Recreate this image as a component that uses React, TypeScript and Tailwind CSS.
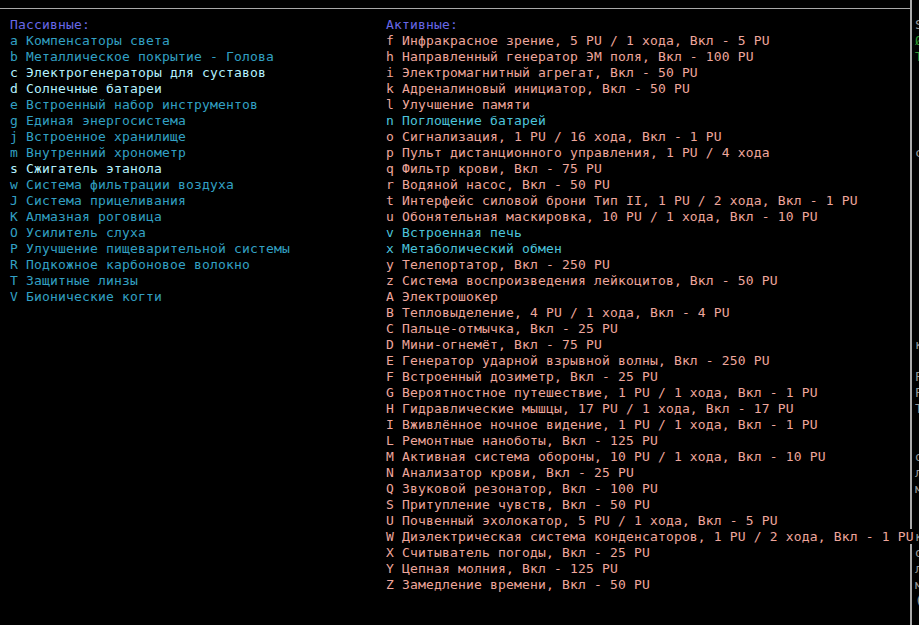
import React from "react";

type Item = { t: string; c?: "hi" | "cy" };

const passive: Item[] = [
  { t: "a Компенсаторы света" },
  { t: "b Металлическое покрытие - Голова" },
  { t: "c Электрогенераторы для суставов", c: "hi" },
  { t: "d Солнечные батареи", c: "hi" },
  { t: "e Встроенный набор инструментов" },
  { t: "g Единая энергосистема" },
  { t: "j Встроенное хранилище" },
  { t: "m Внутренний хронометр" },
  { t: "s Сжигатель этанола", c: "hi" },
  { t: "w Система фильтрации воздуха" },
  { t: "J Система прицеливания" },
  { t: "K Алмазная роговица" },
  { t: "O Усилитель слуха" },
  { t: "P Улучшение пищеварительной системы" },
  { t: "R Подкожное карбоновое волокно" },
  { t: "T Защитные линзы" },
  { t: "V Бионические когти" },
];

const active: Item[] = [
  { t: "f Инфракрасное зрение, 5 PU / 1 хода, Вкл - 5 PU" },
  { t: "h Направленный генератор ЭМ поля, Вкл - 100 PU" },
  { t: "i Электромагнитный агрегат, Вкл - 50 PU" },
  { t: "k Адреналиновый инициатор, Вкл - 50 PU" },
  { t: "l Улучшение памяти" },
  { t: "n Поглощение батарей", c: "cy" },
  { t: "o Сигнализация, 1 PU / 16 хода, Вкл - 1 PU" },
  { t: "p Пульт дистанционного управления, 1 PU / 4 хода" },
  { t: "q Фильтр крови, Вкл - 75 PU" },
  { t: "r Водяной насос, Вкл - 50 PU" },
  { t: "t Интерфейс силовой брони Тип II, 1 PU / 2 хода, Вкл - 1 PU" },
  { t: "u Обонятельная маскировка, 10 PU / 1 хода, Вкл - 10 PU" },
  { t: "v Встроенная печь", c: "cy" },
  { t: "x Метаболический обмен", c: "cy" },
  { t: "y Телепортатор, Вкл - 250 PU" },
  { t: "z Система воспроизведения лейкоцитов, Вкл - 50 PU" },
  { t: "A Электрошокер" },
  { t: "B Тепловыделение, 4 PU / 1 хода, Вкл - 4 PU" },
  { t: "C Пальце-отмычка, Вкл - 25 PU" },
  { t: "D Мини-огнемёт, Вкл - 75 PU" },
  { t: "E Генератор ударной взрывной волны, Вкл - 250 PU" },
  { t: "F Встроенный дозиметр, Вкл - 25 PU" },
  { t: "G Вероятностное путешествие, 1 PU / 1 хода, Вкл - 1 PU" },
  { t: "H Гидравлические мышцы, 17 PU / 1 хода, Вкл - 17 PU" },
  { t: "I Вживлённое ночное видение, 1 PU / 1 хода, Вкл - 1 PU" },
  { t: "L Ремонтные наноботы, Вкл - 125 PU" },
  { t: "M Активная система обороны, 10 PU / 1 хода, Вкл - 10 PU" },
  { t: "N Анализатор крови, Вкл - 25 PU" },
  { t: "Q Звуковой резонатор, Вкл - 100 PU" },
  { t: "S Притупление чувств, Вкл - 50 PU" },
  { t: "U Почвенный эхолокатор, 5 PU / 1 хода, Вкл - 5 PU" },
  { t: "W Диэлектрическая система конденсаторов, 1 PU / 2 хода, Вкл - 1 PU" },
  { t: "X Считыватель погоды, Вкл - 25 PU" },
  { t: "Y Цепная молния, Вкл - 125 PU" },
  { t: "Z Замедление времени, Вкл - 50 PU" },
];

// right clipped panel: row index (0 = top border row) -> char, colour
const side: Record<number, { ch: string; g?: boolean }> = {
  1: { ch: "S" },
  2: { ch: "Ø", g: true },
  3: { ch: "T", g: true },
  9: { ch: "с" },
  21: { ch: "к" },
  23: { ch: "Р" },
  24: { ch: "Р" },
  25: { ch: "Т" },
  28: { ch: "о" },
  29: { ch: "л" },
  30: { ch: "м" },
  33: { ch: "к" },
  34: { ch: "о" },
  35: { ch: "л" },
  36: { ch: "м" },
  37: { ch: "(" },
};

function PassiveLine({ it }: { it: Item }) {
  return (
    <div className={it.c === "hi" ? "h-4 whitespace-pre text-[#b4f2ff]" : "h-4 whitespace-pre text-[#32a0c4]"}>
      {it.t}
    </div>
  );
}

function ActiveLine({ it }: { it: Item }) {
  return (
    <div className="h-4 whitespace-pre">
      <span className={it.c === "cy" ? "bg-black text-[#4cc4dc]" : "bg-black text-[#eea69c]"}>{it.t}</span>
    </div>
  );
}

export default function App() {
  const rows = Array.from({ length: 39 }, (_, i) => i);
  return (
    <div
      className="w-[919px] h-[625px] bg-black overflow-hidden flex text-[13px] tracking-[0.17px] leading-[16px]"
      style={{ fontFamily: '"DejaVu Sans Mono", "Liberation Mono", monospace' }}
    >
      <div className="w-[910px] shrink-0 flex flex-col relative z-10">
        <div className="h-4 flex flex-col justify-center">
          <div className="h-px w-full bg-[#a8a8a8]" />
        </div>
        <div className="flex pl-[10px] pt-[1px]">
          <div className="w-[376px] shrink-0 flex flex-col">
            <div className="h-4 text-[#6868e8]">Пассивные:</div>
            {passive.map((it) => (
              <PassiveLine key={it.t} it={it} />
            ))}
          </div>
          <div className="flex-1 flex flex-col">
            <div className="h-4 text-[#6868e8]">Активные:</div>
            {active.map((it) => (
              <ActiveLine key={it.t} it={it} />
            ))}
          </div>
        </div>
      </div>
      <div className="w-[2px] shrink-0 bg-[#a8a8a8]" />
      <div className="flex-1 flex flex-col pl-[3px] pt-[1px]">
        {rows.map((i) => (
          <div key={i} className={side[i]?.g ? "h-4 text-[#2f9a2f]" : "h-4 text-[#9a9a9a]"}>
            {side[i]?.ch ?? "\u00a0"}
          </div>
        ))}
      </div>
    </div>
  );
}
